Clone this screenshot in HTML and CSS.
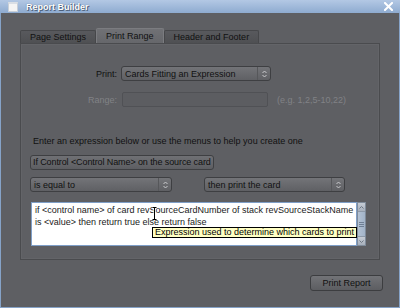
FILE: index.html
```html
<!DOCTYPE html>
<html lang="en">
  <head>
    <meta charset="UTF-8" />
    <title>Report Builder</title>
    <link rel="stylesheet" href="styles.css">
  </head>
  <body>
    <div class="window">
      <div class="titlebar">
        <span class="app-icon"></span>
        <span class="title">Report Builder</span>
        <svg class="close-icon" width="9" height="9" viewBox="0 0 9 9">
          <path d="M1 1 L8 8 M8 1 L1 8" stroke="#ffffff" stroke-width="2" stroke-linecap="square" />
        </svg>
      </div>

      <div class="content">
        <div class="tabs">
          <div class="tab">Page Settings</div>
          <div class="tab active">Print Range</div>
          <div class="tab">Header and Footer</div>
        </div>

        <div class="panel">
          <div class="form-row">
            <span class="field-label">Print:</span>
            <div class="select select-print">
              <span class="select-text">Cards Fitting an Expression</span>
              <span class="select-arrows">
                <svg width="5" height="8" viewBox="0 0 5 8"><path d="M0.5 3 L2.5 1 L4.5 3 M0.5 5 L2.5 7 L4.5 5" fill="none" stroke="#c9cacd" stroke-width="1" /></svg>
              </span>
            </div>
          </div>
          <div class="form-row disabled">
            <span class="field-label">Range:</span>
            <div class="text-input"></div>
            <span class="range-hint">(e.g. 1,2,5-10,22)</span>
          </div>

          <div class="expr">
            <p class="intro">Enter an expression below or use the menus to help you create one</p>
            <div class="button-field">If Control &lt;Control Name&gt; on the source card</div>
            <div class="select-row">
              <div class="select select-op">
                <span class="select-text">is equal to</span>
                <span class="select-arrows">
                  <svg width="5" height="8" viewBox="0 0 5 8"><path d="M0.5 3 L2.5 1 L4.5 3 M0.5 5 L2.5 7 L4.5 5" fill="none" stroke="#c9cacd" stroke-width="1" /></svg>
                </span>
              </div>
              <div class="select select-then">
                <span class="select-text">then print the card</span>
                <span class="select-arrows">
                  <svg width="5" height="8" viewBox="0 0 5 8"><path d="M0.5 3 L2.5 1 L4.5 3 M0.5 5 L2.5 7 L4.5 5" fill="none" stroke="#c9cacd" stroke-width="1" /></svg>
                </span>
              </div>
            </div>

            <div class="script-box">
              <div class="script-text">if &lt;control name&gt; of card revSourceCardNumber of stack revSourceStackName<br>is &lt;value&gt; then return true else return false</div>
              <div class="scrollbar">
                <div class="scroll-btn">
                  <svg width="5" height="3" viewBox="0 0 5 3"><path d="M0.5 2.5 L2.5 0.5 L4.5 2.5" fill="none" stroke="#6d7784" /></svg>
                </div>
                <div class="scroll-thumb">
                  <svg width="5" height="5" viewBox="0 0 5 5"><path d="M0 0.5 H5 M0 2.5 H5 M0 4.5 H5" stroke="#6f7f94" /></svg>
                </div>
                <div class="scroll-btn">
                  <svg width="5" height="3" viewBox="0 0 5 3"><path d="M0.5 0.5 L2.5 2.5 L4.5 0.5" fill="none" stroke="#6d7784" /></svg>
                </div>
              </div>
              <svg class="ibeam" width="5" height="13" viewBox="0 0 5 13">
                <path d="M0.5 0.5 H4.5 M2.5 0.5 V12.5 M0.5 12.5 H4.5" fill="none" stroke="#ffffff" stroke-width="2" />
                <path d="M0.5 0.5 H4.5 M2.5 0.5 V12.5 M0.5 12.5 H4.5" fill="none" stroke="#000000" stroke-width="1" />
              </svg>
              <div class="tooltip">Expression used to determine which cards to print</div>
            </div>
          </div>
        </div>

        <div class="footer">
          <button class="push-btn">Print Report</button>
        </div>
      </div>
    </div>
  </body>
</html>
```

FILE: styles.css
```css
body {
  margin: 0;
  font-family: "Liberation Sans", Arial, sans-serif;
  font-size: 9px;
  color: #111111;
}

.window {
  width: 400px;
  height: 308px;
  box-sizing: border-box;
  background-color: #5e5f63;
  border: 1px solid #86a3c8;
  border-top: none;
  display: flex;
  flex-direction: column;
}

/* title bar */
.titlebar {
  height: 13px;
  margin: 0 -1px;
  padding: 0 8px;
  display: flex;
  align-items: center;
  background: linear-gradient(#b3c8e4, #8eabd0);
}
.app-icon {
  width: 8px;
  height: 7px;
  background-color: #f4f4f4;
  border: 1px solid #c8cfd8;
  border-top: 2px solid #d9dee5;
  margin-right: 8px;
}
.title {
  color: #ffffff;
  font-weight: bold;
  text-shadow: 1px 1px 0 #4d5f7a, 0 0 1px #4d5f7a;
}
.close-icon {
  margin-left: auto;
  margin-right: -1px;
}

.content {
  flex-grow: 1;
  padding: 15px 19px 0;
  display: flex;
  flex-direction: column;
}

/* tabs */
.tabs {
  display: flex;
  align-items: flex-end;
  height: 15px;
}
.tab {
  height: 13px;
  line-height: 13px;
  padding: 0 9px;
  box-sizing: border-box;
  background: linear-gradient(#58595d, #4f5053);
  border: 1px solid #46474a;
  border-bottom: none;
  border-radius: 2px 2px 0 0;
}
.tab.active {
  height: 15px;
  line-height: 14px;
  background: linear-gradient(#707175, #66676b);
  border-color: #7b7c80;
}

/* panel */
.panel {
  height: 217px;
  box-sizing: border-box;
  border: 1px solid #4a4b4e;
  box-shadow: inset 0 0 0 1px #636468;
  padding-top: 22px;
}
.form-row {
  display: flex;
  align-items: center;
  height: 15px;
  margin-bottom: 11px;
}
.field-label {
  width: 96px;
  text-align: right;
  margin-right: 4px;
}
.disabled {
  color: #818286;
  margin-bottom: 0;
}
.text-input {
  width: 146px;
  height: 15px;
  margin-left: 1px;
  box-sizing: border-box;
  background-color: #5c5d61;
  border: 1px solid #505155;
  border-radius: 2px;
}
.range-hint {
  margin-left: 9px;
}

/* selects and buttons */
.select {
  height: 15px;
  box-sizing: border-box;
  display: flex;
  align-items: center;
  border: 1px solid #3e3f42;
  border-radius: 3px;
  background: linear-gradient(#737478, #5f6064);
  padding-left: 3px;
}
.select-text {
  white-space: nowrap;
}
.select-arrows {
  margin-left: auto;
  width: 12px;
  height: 100%;
  border-left: 1px solid #56575a;
  display: flex;
  align-items: center;
  justify-content: center;
}
.select-print {
  width: 150px;
}
.select-op {
  width: 142px;
}
.select-then {
  width: 141px;
}

.expr {
  padding-left: 9px;
}
.intro {
  margin: 29px 0 0 3px;
  line-height: 11px;
}
.button-field {
  width: 184px;
  height: 15px;
  margin-top: 8px;
  box-sizing: border-box;
  padding-left: 2px;
  line-height: 13px;
  letter-spacing: -0.1px;
  white-space: nowrap;
  border: 1px solid #3e3f42;
  border-radius: 3px;
  background: linear-gradient(#6f7074, #5d5e62);
}
.select-row {
  display: flex;
  gap: 32px;
  margin-top: 7px;
}

/* script field */
.script-box {
  position: relative;
  display: flex;
  width: 335px;
  height: 44px;
  margin-top: 10px;
  margin-left: 1px;
}
.script-text {
  flex-grow: 1;
  background-color: #ffffff;
  border: 1px solid #7f9fc8;
  padding: 1px 3px;
  line-height: 12px;
  color: #1a1a1a;
  white-space: nowrap;
}
.scrollbar {
  width: 10px;
  box-sizing: border-box;
  display: flex;
  flex-direction: column;
  background-color: #8d99a8;
  border: 1px solid #7f8b9a;
}
.scroll-btn {
  height: 8px;
  display: flex;
  align-items: center;
  justify-content: center;
  background: linear-gradient(#c6ccd4, #a7b0bc);
}
.scroll-thumb {
  flex-grow: 1;
  margin: 1px 0;
  display: flex;
  align-items: center;
  justify-content: center;
  background: linear-gradient(90deg, #b3c2d4, #a2b3c8);
}
.ibeam {
  position: absolute;
  left: 121px;
  top: 5px;
}
.tooltip {
  position: absolute;
  left: 121px;
  top: 25px;
  height: 11px;
  box-sizing: border-box;
  padding: 0 2px;
  line-height: 9px;
  white-space: nowrap;
  color: #000000;
  background-color: #ffffc4;
  border: 1px solid #000000;
}

/* footer */
.footer {
  display: flex;
  justify-content: flex-end;
  padding-top: 15px;
  margin-right: -3px;
}
.push-btn {
  width: 73px;
  height: 16px;
  padding: 0;
  font-family: "Liberation Sans", Arial, sans-serif;
  font-size: 9px;
  color: #111111;
  border: 1px solid #3c3d40;
  border-radius: 3px;
  background: linear-gradient(#727377, #5c5d61);
}
```
